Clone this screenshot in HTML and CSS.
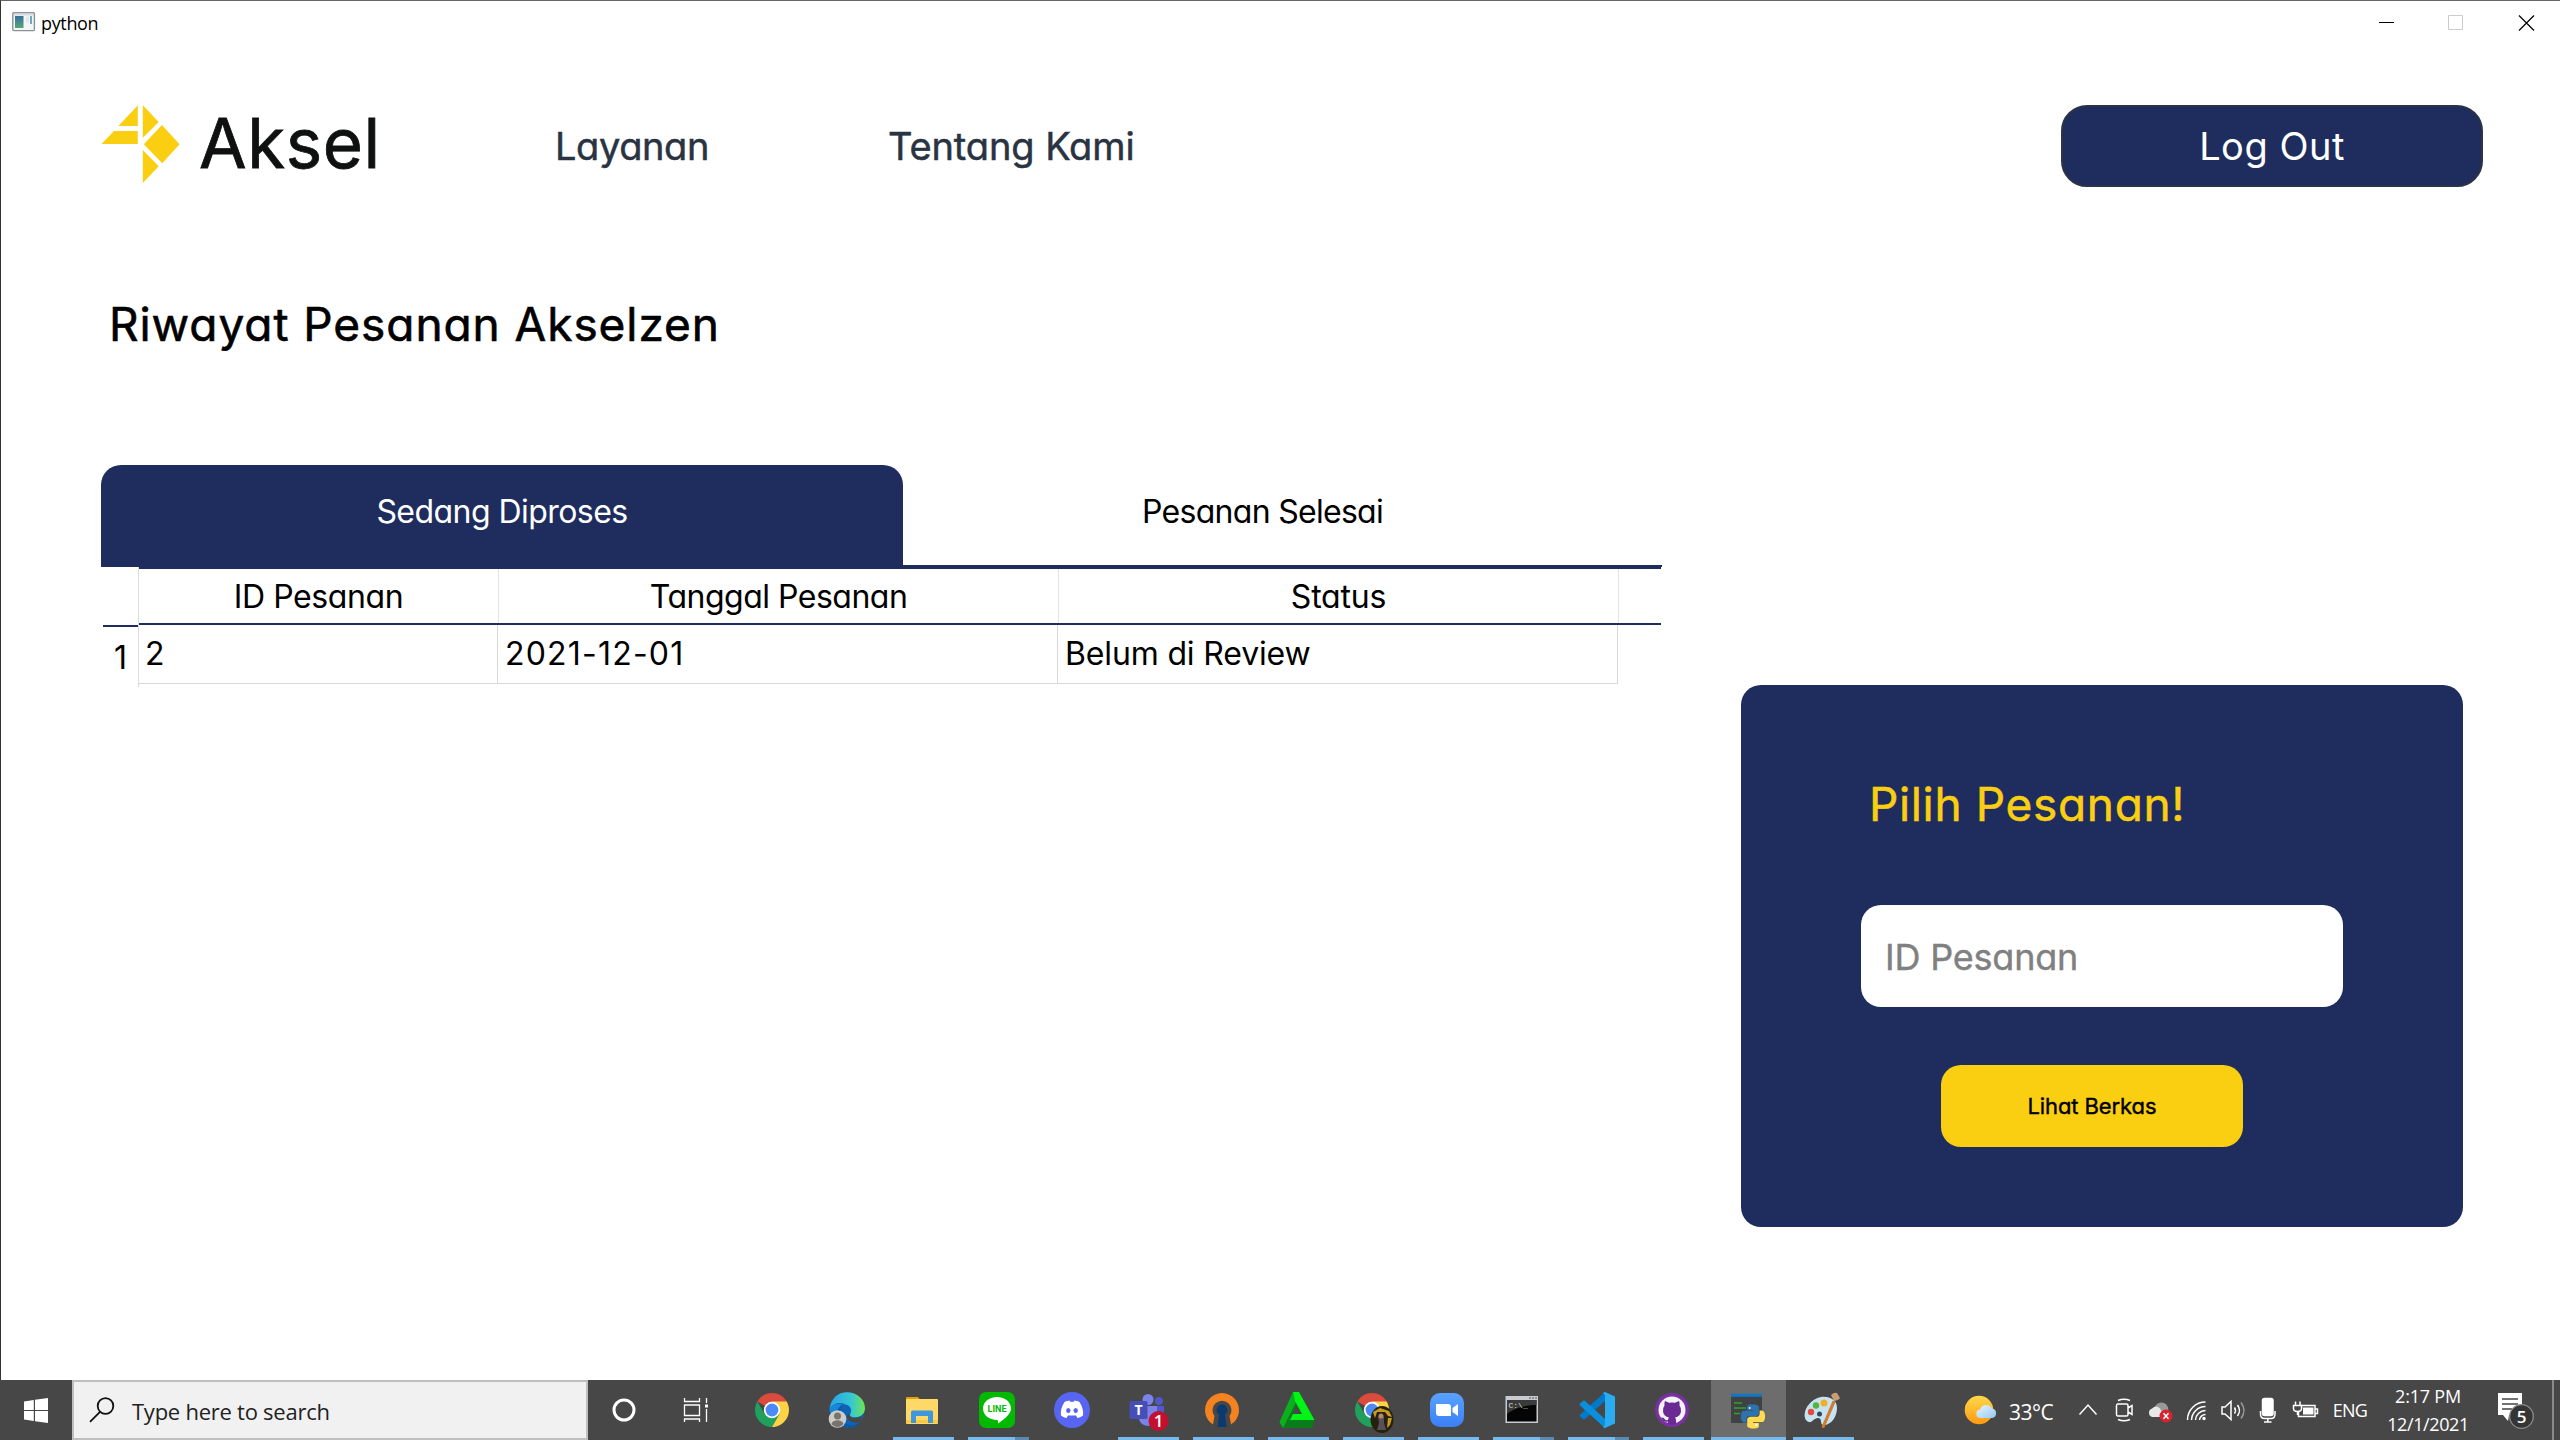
FILE: index.html
```html
<!DOCTYPE html>
<html lang="id">
<head>
<meta charset="utf-8">
<title>python</title>
<link rel="stylesheet" href="styles.css">
</head>
<body>
<div class="window">
  <div class="titlebar">
    <svg class="app-icon" width="24" height="20" viewBox="0 0 24 20"><rect x=".8" y=".8" width="21.6" height="17.8" rx="1" fill="#f4f5f6" stroke="#8d9196" stroke-width="1.4"/><path d="M2 2.5h19" stroke="#d5dbe2" stroke-width="2"/><rect x="3" y="4" width="8.5" height="12" fill="url(#app)"/><path d="M14 4.5h3v6h-3z" fill="#e4e7ea"/><path d="M19 4v8" stroke="#4f94b4" stroke-width="1.6"/><defs><linearGradient id="app" x2="0" y2="1"><stop stop-color="#386f9c"/><stop offset="1" stop-color="#55a877"/></linearGradient></defs></svg>
    <span class="title">python</span>
    <svg class="controls" width="156" height="18" viewBox="0 0 156 18"><path d="M0 8.5h15" stroke="#000"/><path d="M69.500 1.500h14v14h-14z" fill="none" stroke="#ccc"/><path d="M140 1.500l15 15m0-15l-15 15" stroke="#000" stroke-width="1.200"/></svg>
  </div>

  <header class="header">
    <svg class="mark" width="82" height="80" viewBox="100 104 82 80" fill="#facf12"><path d="M137.800 105.300V126H118.400zM114 131h23.800v13h-36.300zM142.800 105.300l15.900 16.700-15.900 15.700zM161.900 125l17.700 19.300-17.400 19-18.400-19zM142.800 150l15.900 16.300-15.900 16.700z"/></svg>
    <span class="brand">Aksel</span>
    <a class="nav nav-layanan">Layanan</a>
    <a class="nav nav-tentang">Tentang Kami</a>
    <button class="logout">Log Out</button>
  </header>

  <h1 class="heading">Riwayat Pesanan Akselzen</h1>

  <main class="main">
    <section class="orders">
      <div class="tabs">
        <div class="tab tab-active">Sedang Diproses</div>
        <div class="tab tab-done">Pesanan Selesai</div>
      </div>
      <div class="table">
        <div class="rowhead">
          <div class="corner"></div>
          <div class="rownum">1</div>
        </div>
        <div class="grid">
          <div class="columns">
            <div class="col">ID Pesanan</div><div class="col wide tanggal">Tanggal Pesanan</div><div class="col wide status">Status</div>
          </div>
          <div class="cells">
            <div class="cell">2</div><div class="cell wide date">2021-12-01</div><div class="cell wide review">Belum di Review</div>
          </div>
        </div>
      </div>
    </section>
    <aside class="panel">
      <h2 class="panel-title">Pilih Pesanan!</h2>
      <div class="field">ID Pesanan</div>
      <button class="view">Lihat Berkas</button>
    </aside>
  </main>
</div>

<footer class="taskbar">
  <div class="start"><svg width="24" height="25" viewBox="0 0 24 25" fill="#fff"><path d="M0 3.500L9.800 2v10H0zM11 1.800L24 0v12H11zM0 13h9.800v10L0 21.500zM11 13h13v12l-13-1.800z"/></svg></div>
  <div class="search">
    <svg width="26" height="26" viewBox="0 0 26 26" fill="none" stroke="#111" stroke-width="1.800"><circle cx="16.500" cy="9" r="7.800"/><path d="M11 14.800L1 24.800"/></svg>
    <span>Type here to search</span>
  </div>
  <div class="sys"><svg width="26" height="26" viewBox="0 0 26 26"><circle cx="13" cy="13" r="10" fill="none" stroke="#fff" stroke-width="3"/></svg></div>
  <div class="sys"><svg width="26" height="26" viewBox="0 0 26 26" fill="none" stroke="#fff" stroke-width="1.300"><path d="M1.500 1v3.500h15V1M1.500 8h15v10.500h-15zM1.500 25v-3h15v3M23.500 1v5M23.500 12v13"/><path d="M22 7.500h3v3h-3z" fill="#fff" stroke="none"/></svg></div>

  <div class="apps">
    <div class="app"><svg viewBox="0 0 40 40"><path d="M20 20L5.300 11.500A17 17 0 0 1 34.700 11.500z" fill="#dc4a3d"/><path d="M12.800 24.200L5.300 11.500A17 17 0 0 0 20 37l7.300-12.800z" fill="#1fa15d"/><path d="M20 11.500h14.700A17 17 0 0 1 20 37l7.500-13z" fill="#fdd245"/><circle cx="20" cy="20" r="8.200" fill="#fff"/><circle cx="20" cy="20" r="6.400" fill="#4b8af4"/></svg></div>
    <div class="app"><svg viewBox="0 0 40 40"><defs><linearGradient id="e1"><stop stop-color="#2aa4e4"/><stop offset=".6" stop-color="#35c6d6"/><stop offset="1" stop-color="#6be64f"/></linearGradient></defs><circle cx="20" cy="20" r="17.500" fill="#0f63b5"/><path d="M2.500 19C4 8 11 2.200 20 2.200c10 0 18 7 18 16 0 6-5 9-10 9-4 0-6-1.500-5-3 3-4 0-10-6-10-6 0-11 2-14.500 4.800z" fill="url(#e1)"/><path d="M2.500 19c4-6 10-7 15-5-6 4-7 12-1 18 4 4 11 4 17 1-5 5-12 6-18 3.500C6 34 2 27 2.500 19z" fill="#0c59a4"/><path d="M2.500 19c3-5 9-6.500 14-5-6 3-9 9-6 17-5-2-8-7-8-12z" fill="#1687d9"/><path d="M23 24c-1 3 3 5 7 4l5-1.500-1.500 5c-6 3-13 0-14-6z" fill="#474747"/><circle cx="10.500" cy="29" r="8.800" fill="#cfcbc7"/><circle cx="10.500" cy="26" r="3.500" fill="#77736f"/><path d="M4.500 34c1-5 11-5 12 0-3 4-9 4-12 0z" fill="#77736f"/></svg></div>
    <div class="app run"><svg viewBox="0 0 40 40"><path d="M4 8q0-1 1-1h11l3 4H4z" fill="#e3a008"/><rect x="4" y="9" width="32" height="25" rx="1" fill="#ffd968"/><path d="M4 30h32v3H4z" fill="#fbc945"/><path d="M9 33V22q0-1.500 1.500-1.500h19Q31 20.500 31 22v11h-5v-7H14v7z" fill="#3e96dc"/></svg></div>
    <div class="app run more"><svg viewBox="0 0 40 40"><rect x="2" y="2" width="36" height="36" rx="7" fill="#00b900"/><path d="M20 7c8 0 14 5 14 11.500 0 5-5 9.500-13 15 0-2 .5-3-1-3.500-8 0-14-5-14-11.500S12 7 20 7z" fill="#fff"/><text x="20" y="22" class="line-text">LINE</text></svg></div>
    <div class="app"><svg viewBox="0 0 40 40"><circle cx="20" cy="20" r="18" fill="#5865f2"/><path d="M12.500 12c2-1 3.500-1.300 5-1.500l.7 1.300h3.600l.7-1.300c1.500.2 3 .5 5 1.500 3 5 4.200 9 3.500 13.500-2 1.600-4 2.300-5.500 2.500l-1.500-2.500h-8L14.500 28c-1.500-.2-3.500-.9-5.500-2.500C8.300 21 9.500 17 12.500 12z" fill="#fff"/><ellipse cx="16.300" cy="20.500" rx="2.200" ry="2.500" fill="#5865f2"/><ellipse cx="23.700" cy="20.500" rx="2.200" ry="2.500" fill="#5865f2"/></svg></div>
    <div class="app run"><svg viewBox="0 0 40 40"><circle cx="21" cy="9.500" r="5.500" fill="#7b83eb"/><circle cx="32" cy="11" r="4" fill="#5059c9"/><path d="M26 16h11v9a6 6 0 0 1-11 3z" fill="#5059c9"/><path d="M12 16h18v12c0 5-4 8-8.500 8S12 33 12 28z" fill="#7b83eb"/><rect x="2.500" y="11" width="18" height="18" rx="1.500" fill="#464eb8"/><text x="11.500" y="25" class="teams-text">T</text><circle cx="31.500" cy="31" r="10" fill="#c50f2f"/><text x="31.500" y="37" class="badge-text">1</text></svg></div>
    <div class="app run"><svg viewBox="0 0 40 40"><path d="M11 34.500A17 17 0 1 1 29 34.500L27.500 26A9.500 9.500 0 1 0 12.500 26z" fill="#f58220"/><path d="M20 14.500a5.500 5.500 0 0 1 3 10l1.500 12.500h-9L17 24.500a5.500 5.500 0 0 1 3-10z" fill="#0b3a70"/></svg></div>
    <div class="app run"><svg viewBox="0 0 40 40"><path d="M16 2h6l15.500 28-2.500 8H6L2.500 32z" fill="#0a7c1d"/><path d="M16 2L2.500 32 6 38l13-26z" fill="#0caf1d"/><path d="M16 2h6l15.500 28H13l3-6h9L18 11z" fill="#00f516"/><path d="M19 15l5.500 9H16z" fill="#474747"/></svg></div>
    <div class="app run"><svg viewBox="0 0 40 40"><path d="M20 20L5.300 11.500A17 17 0 0 1 34.700 11.500z" fill="#dc4a3d"/><path d="M12.800 24.200L5.300 11.500A17 17 0 0 0 20 37l7.300-12.800z" fill="#1fa15d"/><path d="M20 11.500h14.700A17 17 0 0 1 20 37l7.500-13z" fill="#fdd245"/><circle cx="20" cy="20" r="8.200" fill="#fff"/><circle cx="20" cy="20" r="6.400" fill="#4b8af4"/><ellipse cx="30" cy="29.500" rx="11.500" ry="13.500" fill="#26200f"/><path d="M21 22l7-4 9 3 3 6-4-1-3-4h-8l-2 6zM36 28h4l-2 7-3 3z" fill="#c99a20"/><path d="M26 27q3-5 6 0v6l2 7h-9l2-7z" fill="#59505a"/><circle cx="29" cy="26" r="2.500" fill="#b98768"/></svg></div>
    <div class="app run"><svg viewBox="0 0 40 40"><defs><linearGradient id="z" x2="0" y2="1"><stop stop-color="#5aa2ff"/><stop offset="1" stop-color="#3a80f6"/></linearGradient></defs><rect x="3" y="3" width="34" height="34" rx="10" fill="url(#z)"/><path d="M9 14h12q3 0 3 3v9H12q-3 0-3-3zM25.500 18l5.500-4v12l-5.500-4z" fill="#fff"/></svg></div>
    <div class="app run more"><svg viewBox="0 0 40 40"><rect x="3.500" y="6" width="32.500" height="27" fill="#c8ccd0"/><path d="M5 10h29.500v21.500H5z" fill="#050505"/><path d="M5 10h29.500v5C25 15 12 18 5 24z" fill="#3a3a3a"/><path d="M27 8h2m1 0h2m1 0h2" stroke="#555"/><text x="6.500" y="18" class="cmd-text">C:\_</text></svg></div>
    <div class="app run more"><svg viewBox="0 0 40 40"><path d="M28 2v9L8 29q-1 1-2 0l-3-2.500q-1-1 0-2z" fill="#0179cb"/><path d="M28 38v-9L8 11q-1-1-2 0l-3 2.500q-1 1 0 2z" fill="#0a8fdc"/><path d="M28 2l10 4.500v27L28 38q-1 0-2-1l2-2V5l-2-2q1-1 2-1z" fill="#2aacf3"/></svg></div>
    <div class="app run"><svg viewBox="0 0 40 40"><circle cx="20" cy="20" r="17" fill="#7a2fa5"/><circle cx="20" cy="20" r="13.500" fill="#f3f3f5"/><path d="M13 11l4 1.800q3-.8 6 0l4-1.800q1 2 .5 4.500 2 2.500 1.500 6-.8 5-6 6 1 1 1 3v4h-8v-3q-4.500 1-6-2.500l-1-1.500q3-.5 4 2 1 1 3 .5 0-1.500 1-2.500-5.200-1-6-6-.5-3.500 1.500-6Q12 13 13 11z" fill="#6b2a93"/></svg></div>
    <div class="app run active"><svg viewBox="0 0 40 40"><defs><path id="snake" d="M14.250.18l.9.2.73.260.59.3.45.320.34.340.25.340.16.330.1.3.040.260.020.2-.010.130V8.500l-.050.630-.130.550-.210.460-.260.380-.3.310-.330.250-.350.190-.350.140-.330.1-.3.070-.260.040-.210.020H8.770l-.690.050-.590.140-.5.220-.410.270-.330.320-.270.350-.2.360-.150.370-.1.350-.070.320-.040.270-.020.210v3.060H3.170l-.210-.030-.280-.070-.320-.120-.350-.180-.360-.260-.360-.360-.350-.460-.320-.590-.280-.730-.210-.880-.140-1.050-.050-1.230.060-1.220.160-1.040.240-.870.320-.710.360-.570.4-.440.420-.330.420-.240.4-.160.360-.1.320-.050.240-.010h.16l.060.010h8.160v-.830H6.180l-.010-2.750-.020-.370.050-.340.110-.310.170-.280.250-.260.310-.230.380-.2.440-.180.510-.150.580-.120.640-.1.710-.060.770-.040.840-.020 1.270.050z"/></defs><path d="M4 4h31v29H4z" fill="#3f4143"/><path d="M4 3.800h31v3H4z" fill="#0b79c8"/><path d="M7 13h8M7 18h12M7 23.500h6" stroke="#2fa22e" stroke-width="1.500"/><g transform="translate(14 14.500) scale(1)"><use href="#snake" fill="#2f73ad" stroke="#2f73ad" stroke-width=".4"/><use href="#snake" transform="rotate(180 12 12)" fill="#ffdc51"/><circle cx="8.700" cy="3.500" r="1.100" fill="#e8eef4"/><circle cx="15.300" cy="20.500" r="1.100" fill="#fff"/></g></svg></div>
    <div class="app run"><svg viewBox="0 0 40 40"><path d="M3 28C1 19 9 9 19 7c9-1 16 3 16 11 0 9-6 17-13 17-5 0-1-7-6-7-4 0-6 5-9 4-2-.5-3.500-2-4-4z" fill="#c6e3f4"/><circle cx="9" cy="22" r="3.200" fill="#e3493d"/><circle cx="14" cy="15.500" r="3.200" fill="#54b43f"/><circle cx="22" cy="13" r="3.500" fill="#f5ae23"/><circle cx="17.500" cy="24" r="2.500" fill="#354859"/><path d="M31 11L20 37l2 .500L33 12z" fill="#d07a2c" stroke="#d07a2c"/><path d="M29 5q3-3 6-2l3 5q-1 2-6 3z" fill="#c99e74"/></svg></div>
  </div>

  <div class="tray">
    <svg class="tray-icon" viewBox="0 0 36 36"><defs><linearGradient id="s" x2="0" y2="1"><stop stop-color="#ffd94a"/><stop offset="1" stop-color="#ff9a10"/></linearGradient><linearGradient id="c" x2="1" y2="1"><stop stop-color="#eaf7ff"/><stop offset="1" stop-color="#93c8f2"/></linearGradient></defs><circle cx="17" cy="18" r="14.300" fill="url(#s)" stroke="none"/><path d="M18 26a4.300 4.300 0 0 1 0-8.500 6.500 6.500 0 0 1 12-1 4.800 4.800 0 0 1 0 9.500z" fill="url(#c)" stroke="none"/></svg>
    <span class="temp">33°C</span>
    <svg class="tray-icon" viewBox="0 0 36 36"><path d="M9.500 22.500l8.500-9.500 8.500 9.500"/></svg>
    <svg class="tray-icon" viewBox="0 0 36 36"><path d="M11.500 12h9q1.500 0 1.500 2v8q0 2-1.500 2h-9q-1 0-1-2v-8q0-2 1-2zM22 16l4-2.500v9L22 20M12 8.500q6-2.500 12 0M12 27.500q6 2.500 12 0"/></svg>
    <svg class="tray-icon" viewBox="0 0 36 36"><path d="M12 18q1-7 7-7.500 7 0 7.500 8v4H15z" fill="#989898" stroke="none"/><path d="M10 25a4.500 4.500 0 0 1 0-8.500q4-4 8 0l5 8.500z" fill="#e8e8e8" stroke="none"/><circle cx="24" cy="24" r="6.500" fill="#d9232e" stroke="none"/><path d="M21.500 21.200l5 5.600m0-5.600l-5 5.600"/></svg>
    <svg class="tray-icon" viewBox="0 0 36 36"><path d="M9.500 28A18 18 0 0 1 27.500 10M13.500 28A14 14 0 0 1 27.500 14.500M17.500 28a10 10 0 0 1 10-9.500M21.500 28a6 6 0 0 1 6-5.500"/><circle cx="26" cy="26.500" r="1" fill="#fff"/></svg>
    <svg class="tray-icon" viewBox="0 0 36 36"><path d="M8 15h3l6-5.500v18L11 22H8zM20.500 15.500q2 3 0 6M23.500 13q4 5.500 0 11"/><path d="M27 10.500q6 8 0 16" stroke="#999"/></svg>
    <svg class="tray-icon" viewBox="0 0 36 36"><rect x="12.500" y="6.500" width="10.500" height="17" rx="2" fill="#fff"/><path d="M10.500 19v3q0 4.500 4 4.500h6.500q4 0 4-4.500v-3M17.800 26.500v3.500M14 30h7.500"/></svg>
    <svg class="tray-icon" viewBox="0 0 36 36"><path d="M15 13.500h14v11H12.500V20M29.500 17h2v4.500h-2"/><path d="M17 15.500h10.500v7H17z" fill="#fff" stroke="none"/><path d="M9.500 9.500v4M14 9.500v4M7.500 13.500h8v3q0 3-4 3t-4-3zM11.500 19v4"/></svg>
    <span class="lang">ENG</span>
    <div class="clock"><span>2:17 PM</span><span class="day">12/1/2021</span></div>
    <svg class="notif" width="40" height="42" viewBox="0 0 40 42"><path d="M2 4h24v22H13l-1 6-5-6H2z" fill="#fff"/><path d="M6 10h16M6 15h16M6 20h10" stroke="#444" stroke-width="1.500"/><circle cx="25.500" cy="27.500" r="11.800" fill="#353535" stroke="#8c8c8c" stroke-width="1.300"/><text x="25.500" y="34" class="notif-text">5</text></svg>
    <div class="peek"></div>
  </div>
</footer>
</body>
</html>
```
FILE: styles.css
```css
* { box-sizing: border-box; }

body {
  margin: 0;
  width: 2560px;
  height: 1440px;
  overflow: hidden;
  background: #fff;
  color: #000;
  font-family: Inter, "Open Sans", sans-serif;
  font-feature-settings: "cv11";
  white-space: nowrap;
}

h1, h2 { margin: 0; font-weight: 400; }
button { border: 0; padding: 0; font: inherit; }

/* Window frame */
.window {
  display: flex;
  flex-direction: column;
  height: 1380px;
  border-top: 1px solid #666;
  border-left: 1px solid #333;
}
.titlebar {
  display: flex;
  align-items: center;
  height: 44px;
  padding: 0 25px 0 11px;
  font: 18px/44px "Open Sans", sans-serif;
}
.app-icon { margin-bottom: 2px; }
.title { margin-left: 5px; letter-spacing: -.35px; }
.controls { margin-left: auto; }

/* Header */
.header {
  display: flex;
  align-items: center;
  height: 82px;
  margin-top: 60px;
  padding: 0 77px 0 99px;
}
.mark { margin-bottom: 4px; }
.brand {
  width: 357px;
  padding: 0 0 6px 17px;
  font-size: 69px;
  line-height: 78px;
  letter-spacing: .6px;
  color: #0f1110;
  -webkit-text-stroke: .8px #0f1110;
}
.nav {
  font-size: 38px;
  color: #2a3342;
  letter-spacing: -.1px;
  -webkit-text-stroke: .5px #2a3342;
}
.nav-layanan { width: 349px; padding-left: 16px; letter-spacing: -.4px; }
.logout {
  width: 422px;
  height: 82px;
  margin-left: auto;
  border: 2px solid #2b3344;
  border-radius: 26px;
  background: #1e2d5e;
  color: #fff;
  font-size: 38px;
  letter-spacing: .5px;
}

.heading {
  margin-top: 109px;
  padding-left: 108px;
  font-size: 46px;
  line-height: 56px;
  letter-spacing: .93px;
  -webkit-text-stroke: .6px #000;
}

/* Orders */
.main {
  display: flex;
  align-items: flex-start;
  justify-content: space-between;
  margin-top: 113px;
  padding: 0 97px 0 100px;
}
.orders { width: 1561px; font-size: 32px; }
.tabs { display: flex; height: 102px; }
.tab {
  display: flex;
  align-items: center;
  justify-content: center;
  padding-bottom: 9px;
  letter-spacing: -.55px;
}
.tab-active {
  width: 802px;
  border-radius: 20px 20px 0 0;
  background: #1e2d5e;
  color: #fff;
}
.tab-done {
  flex: 1;
  padding: 0 40px 7px 0;
  border-bottom: 2px solid #1e2d5e;
  letter-spacing: -.7px;
}
.table { display: flex; }
.rowhead {
  width: 38px;
  height: 120px;
  border-right: 1px solid #ddd;
}
.corner { height: 60px; margin-left: 2px; border-bottom: 2px solid #1e2d5e; }
.rownum {
  padding-right: 11px;
  line-height: 61px;
  text-align: right;
}
.grid { width: 1522px; }
.columns {
  display: flex;
  height: 58px;
  border-top: 2px solid #1e2d5e;
  border-bottom: 2px solid #1e2d5e;
}
.col {
  width: 360px;
  border-right: 1px solid #e4e4e4;
  line-height: 56px;
  text-align: center;
  letter-spacing: -.4px;
}
.col.wide, .cell.wide { width: 560px; }
.col.tanggal { letter-spacing: -.5px; }
.col.status { letter-spacing: -.2px; }
.cells { display: flex; }
.cell {
  width: 359px;
  height: 59px;
  padding-left: 6px;
  border-right: 1px solid #d8d8d8;
  border-bottom: 1px solid #d8d8d8;
  line-height: 58px;
}
.cell.wide { padding-left: 7px; }
.date { letter-spacing: 1.2px; }
.review { letter-spacing: -.15px; }

/* Order picker */
.panel {
  display: flex;
  flex-direction: column;
  align-items: flex-start;
  width: 722px;
  height: 542px;
  margin-top: 220px;
  padding: 91px 0 0 120px;
  border-radius: 20px;
  background: #1e2d5e;
}
.panel-title {
  margin-left: 8px;
  font-size: 46px;
  line-height: 56px;
  letter-spacing: .65px;
  color: #facf12;
  -webkit-text-stroke: .5px #facf12;
}
.field {
  width: 482px;
  height: 102px;
  margin-top: 73px;
  padding-left: 24px;
  border-radius: 20px;
  background: #fff;
  color: #808080;
  font-size: 36px;
  line-height: 104px;
  letter-spacing: -.2px;
  -webkit-text-stroke: .4px #808080;
}
.view {
  width: 302px;
  height: 82px;
  margin: 58px 0 0 80px;
  border-radius: 20px;
  background: #facf12;
  color: #000;
  font-size: 22px;
  letter-spacing: -.1px;
  -webkit-text-stroke: .4px #000;
}

/* Taskbar */
.taskbar {
  display: flex;
  height: 60px;
  background: #474747;
  color: #fff;
  font-family: "Open Sans", sans-serif;
}
.taskbar svg { display: block; }
.start {
  display: flex;
  align-items: center;
  justify-content: center;
  width: 72px;
}
.search {
  display: flex;
  align-items: center;
  gap: 17px;
  width: 516px;
  padding-left: 15px;
  border: 2px solid #bfbfbf;
  background: #f1f1f1;
  color: #222;
  font-size: 22px;
  letter-spacing: -.25px;
}
.search span { padding-top: 2px; }
.sys {
  display: flex;
  align-items: center;
  justify-content: center;
  width: 72px;
}
.apps { display: flex; margin-left: 4px; }
.app {
  display: flex;
  flex-direction: column;
  align-items: center;
  justify-content: space-between;
  width: 75px;
  padding-top: 10px;
}
.app svg { width: 40px; height: 40px; margin-right: 3px; overflow: visible; }
.run::after { content: ""; width: 61px; height: 3px; background: #76b9ed; }
.more::after { background: linear-gradient(90deg, #76b9ed 47px, #5a8ab0 47px); }
.active { background: #6d6d6d; }
.active::after { width: 75px; }

.line-text { font: 700 9px Roboto, sans-serif; text-anchor: middle; fill: #00b900; }
.teams-text { font: 700 14px "Open Sans", sans-serif; text-anchor: middle; fill: #fff; }
.badge-text { font: 600 17px "Open Sans", sans-serif; text-anchor: middle; fill: #fff; }
.cmd-text { font: 8px "Liberation Mono", monospace; fill: #ddd; }
.notif-text { font: 600 17px "Open Sans", sans-serif; text-anchor: middle; fill: #fff; }

/* System tray */
.tray { display: flex; align-items: center; margin-left: auto; }
.tray-icon {
  width: 36px;
  height: 36px;
  fill: none;
  stroke: #fff;
  stroke-width: 1.5;
}
.temp { width: 72px; padding: 3px 0 0 11px; font-size: 21px; letter-spacing: -.5px; }
.lang { width: 56px; padding-bottom: 1px; text-align: center; font-size: 18px; letter-spacing: -.7px; }
.clock {
  display: flex;
  flex-direction: column;
  width: 100px;
  text-align: center;
  font-size: 18px;
  line-height: 28px;
  letter-spacing: -.2px;
}
.day { letter-spacing: -.4px; }
.notif { margin-left: 18px; }
.peek { width: 2px; height: 60px; margin: 0 6px 0 16px; background: #8a8a8a; }
```
